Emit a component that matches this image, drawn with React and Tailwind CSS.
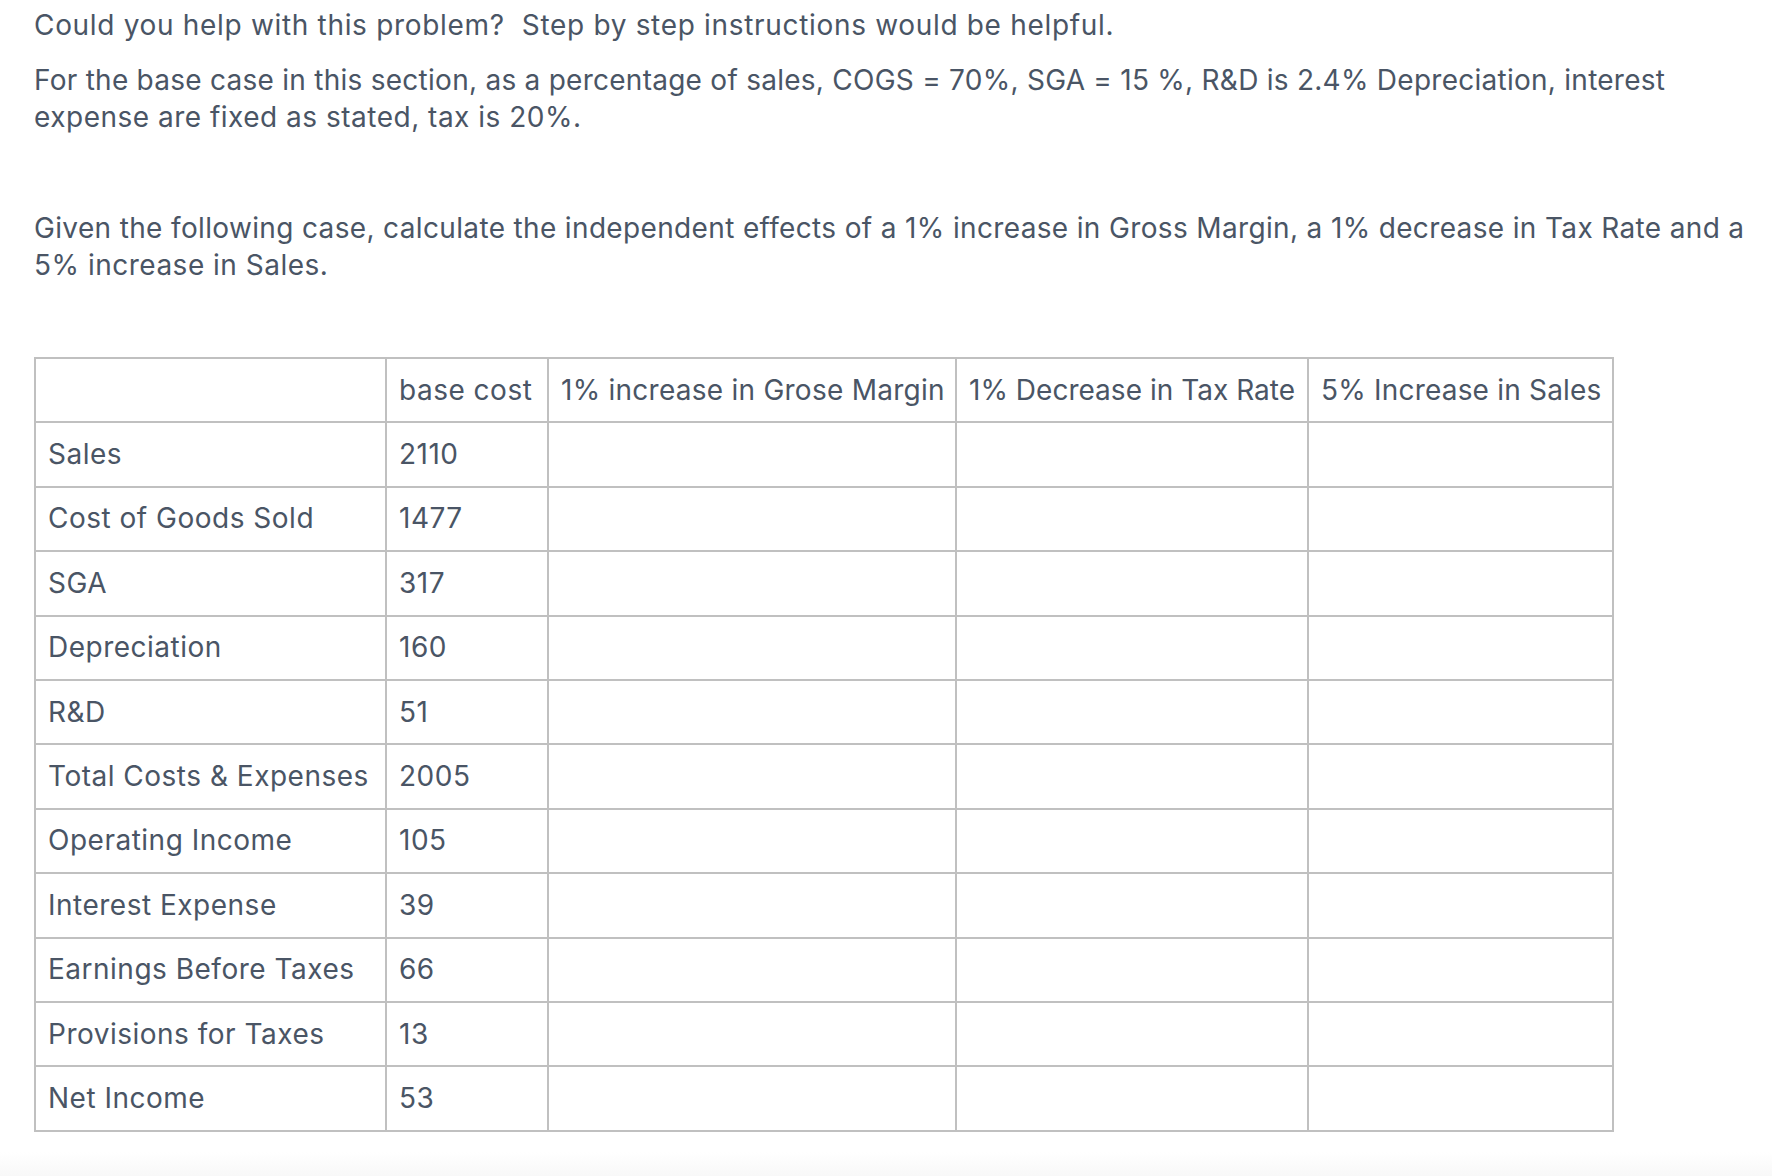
import React from "react";

const rows = [
  ["Sales", "2110"],
  ["Cost of Goods Sold", "1477"],
  ["SGA", "317"],
  ["Depreciation", "160"],
  ["R&D", "51"],
  ["Total Costs & Expenses", "2005"],
  ["Operating Income", "105"],
  ["Interest Expense", "39"],
  ["Earnings Before Taxes", "66"],
  ["Provisions for Taxes", "13"],
  ["Net Income", "53"],
];

const cell = "border-2 border-[#c0c0c0] px-[12px] h-[64.4px] align-middle whitespace-nowrap";

export default function App() {
  return (
    <div
      className="w-[1772px] h-[1176px] bg-white text-gray-600 flex flex-col"
      style={{ fontFamily: "Inter, 'Noto Sans', sans-serif" }}
    >
      <div className="pl-[34px] pt-[7px] text-[28px] leading-[37px] tracking-[0.5px]">
        <p className="mb-[18px] whitespace-nowrap tracking-[0.68px]">
          Could you help with this problem?&nbsp; Step by step instructions would be helpful.
        </p>
        <p className="mb-[18px] whitespace-nowrap">
          <span className="tracking-[0.26px]">
            For the base case in this section, as a percentage of sales, COGS = 70%, SGA = 15 %, R&amp;D is 2.4% Depreciation, interest
          </span>
          <br />
          <span className="tracking-[0.5px]">expense are fixed as stated, tax is 20%.</span>
        </p>
        <p className="mb-[18px] h-[38px]"></p>
        <p className="mb-[18px] whitespace-nowrap">
          <span className="tracking-[0.35px]">
            Given the following case, calculate the independent effects of a 1% increase in Gross Margin, a 1% decrease in Tax Rate and a
          </span>
          <br />
          <span className="tracking-[0.5px]">5% increase in Sales.</span>
        </p>
        <p className="mb-[18px] h-[37px]"></p>
        <table className="border-collapse table-fixed w-[1578px] mt-[6px]">
          <colgroup>
            <col className="w-[351px]" />
            <col className="w-[162px]" />
            <col className="w-[408px]" />
            <col className="w-[352px]" />
            <col className="w-[305px]" />
          </colgroup>
          <thead>
            <tr>
              <th className={cell + " font-normal text-left"}></th>
              <th className={cell + " font-normal text-left"}>base cost</th>
              <th className={cell + " font-normal text-left tracking-[0.25px]"}>1% increase in Grose Margin</th>
              <th className={cell + " font-normal text-left tracking-[0.02px]"}>1% Decrease in Tax Rate</th>
              <th className={cell + " font-normal text-left tracking-[0.2px]"}>5% Increase in Sales</th>
            </tr>
          </thead>
          <tbody>
            {rows.map(([label, value]) => (
              <tr key={label}>
                <td className={cell}>{label}</td>
                <td className={cell}>{value}</td>
                <td className={cell}></td>
                <td className={cell}></td>
                <td className={cell}></td>
              </tr>
            ))}
          </tbody>
        </table>
      </div>
      <div className="mt-auto h-[24px] bg-gradient-to-b from-white to-[#f8f8f8]"></div>
    </div>
  );
}
